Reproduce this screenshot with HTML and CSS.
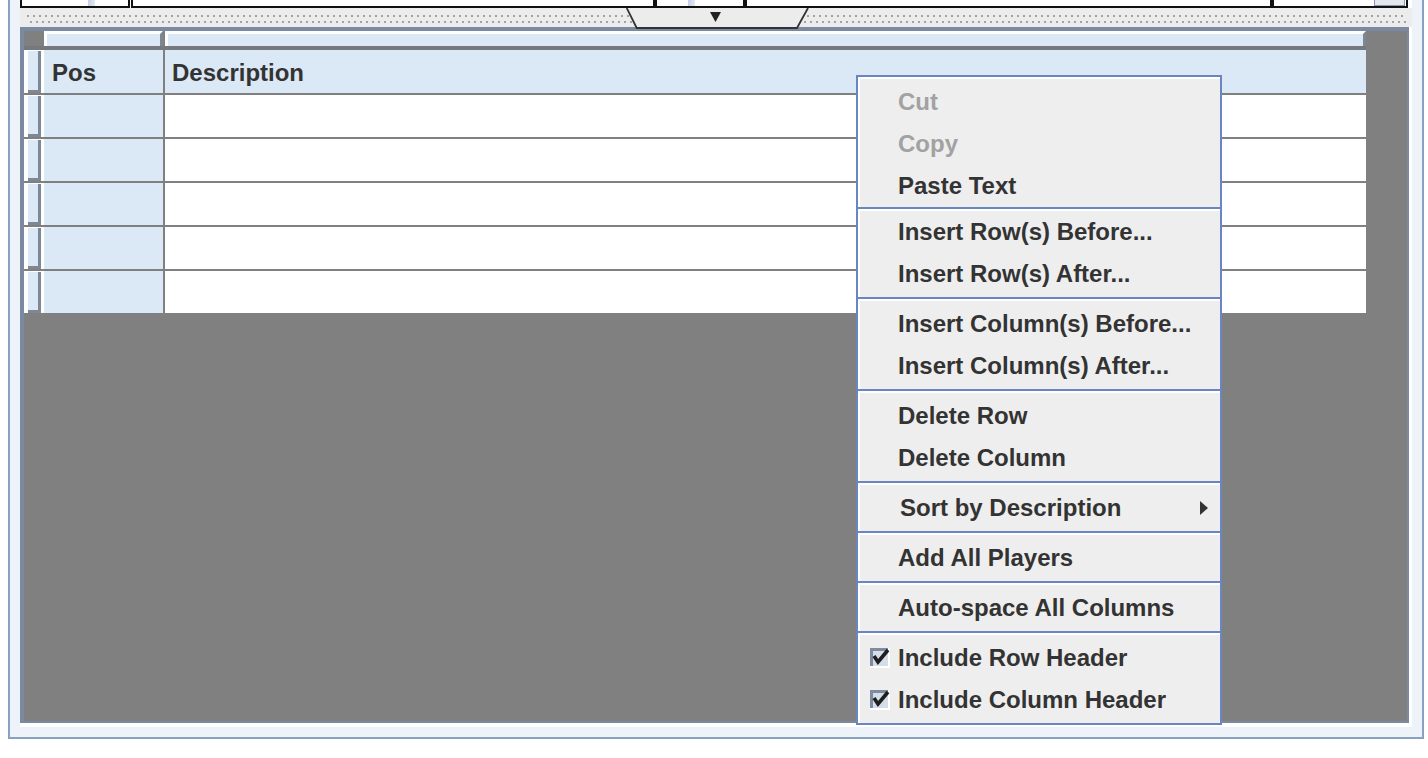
FILE: index.html
```html
<!DOCTYPE html>
<html lang="en">
<head>
<meta charset="UTF-8">
<title>Table editor</title>
<link rel="stylesheet" href="styles.css">
</head>
<body>
    <div class="frame">
        <div class="pane">
            <!-- bottom edge of the editor fields above the split -->
            <div class="fields">
                <div class="field f1"><span class="nub"></span></div>
                <div class="field f2"></div>
                <div class="field f3"><span class="nub"></span></div>
                <div class="field f4"></div>
                <div class="field f5"><span class="mini-btn"></span></div>
            </div>

            <div class="divider">
                <svg class="grip" height="8">
                    <defs>
                        <pattern id="dots" width="6" height="8" patternUnits="userSpaceOnUse">
                            <rect x="1" y="0" width="2" height="2" fill="#a3a3a3" />
                            <rect x="4" y="6" width="2" height="2" fill="#a3a3a3" />
                        </pattern>
                    </defs>
                    <rect width="100%" height="8" fill="url(#dots)" />
                </svg>
                <svg class="tab" width="183" height="21" viewBox="0 0 183 21">
                    <polygon points="0.7,0 182,0 171,20 10.7,20" fill="#ececec" />
                    <polyline points="0.7,0 10.7,20 171,20 182,0" fill="none" stroke="#333" stroke-width="1.8" />
                    <polygon points="84,4 95,4 89.5,14" fill="#222" />
                </svg>
            </div>

            <div class="scroll-wrap">
                <div class="viewport">
                    <div class="table">
                        <div class="hdr-top">
                            <div class="corner"></div>
                            <div class="hcell pos-w"></div>
                            <div class="hcell desc-w"></div>
                        </div>
                        <div class="row head">
                            <div class="rh"><span></span></div>
                            <div class="cell pos">Pos</div>
                            <div class="cell desc">Description</div>
                        </div>
                        <div class="row">
                            <div class="rh"><span></span></div>
                            <div class="cell pos"></div>
                            <div class="cell desc"></div>
                        </div>
                        <div class="row">
                            <div class="rh"><span></span></div>
                            <div class="cell pos"></div>
                            <div class="cell desc"></div>
                        </div>
                        <div class="row">
                            <div class="rh"><span></span></div>
                            <div class="cell pos"></div>
                            <div class="cell desc"></div>
                        </div>
                        <div class="row">
                            <div class="rh"><span></span></div>
                            <div class="cell pos"></div>
                            <div class="cell desc"></div>
                        </div>
                        <div class="row">
                            <div class="rh"><span></span></div>
                            <div class="cell pos"></div>
                            <div class="cell desc"></div>
                        </div>
                    </div>
                </div>
            </div>
        </div>
    </div>

    <!-- Context menu -->
    <div class="popup">
        <div class="grp">
            <div class="mi off">Cut</div>
            <div class="mi off">Copy</div>
            <div class="mi">Paste Text</div>
        </div>
        <div class="grp snug">
            <div class="mi">Insert Row(s) Before...</div>
            <div class="mi">Insert Row(s) After...</div>
        </div>
        <div class="grp">
            <div class="mi">Insert Column(s) Before...</div>
            <div class="mi">Insert Column(s) After...</div>
        </div>
        <div class="grp">
            <div class="mi">Delete Row</div>
            <div class="mi">Delete Column</div>
        </div>
        <div class="grp">
            <div class="mi sub">
                <span>Sort by Description</span>
                <svg width="8" height="14" viewBox="0 0 8 14"><polygon points="0,0 8,7 0,14" fill="#333" /></svg>
            </div>
        </div>
        <div class="grp">
            <div class="mi">Add All Players</div>
        </div>
        <div class="grp">
            <div class="mi">Auto-space All Columns</div>
        </div>
        <div class="grp">
            <div class="mi check">
                <svg class="box" width="20" height="20" viewBox="0 0 20 20">
                    <rect width="20" height="20" fill="#fff" />
                    <rect width="18" height="18" fill="#7d8ca0" />
                    <rect x="3" y="3" width="15" height="15" fill="#d5dee8" />
                    <polyline points="4,8 8,14 18,2" fill="none" stroke="#1e1e1e" stroke-width="3.6" />
                </svg>
                <span>Include Row Header</span>
            </div>
            <div class="mi check">
                <svg class="box" width="20" height="20" viewBox="0 0 20 20">
                    <rect width="20" height="20" fill="#fff" />
                    <rect width="18" height="18" fill="#7d8ca0" />
                    <rect x="3" y="3" width="15" height="15" fill="#d5dee8" />
                    <polyline points="4,8 8,14 18,2" fill="none" stroke="#1e1e1e" stroke-width="3.6" />
                </svg>
                <span>Include Column Header</span>
            </div>
        </div>
    </div>
</body>
</html>
```

FILE: styles.css
```css
body {
    margin: 0;
    background: #fff;
    font-family: "Liberation Sans", Arial, sans-serif;
    color: #333;
}

/* Outer panel */
.frame {
    margin-left: 8px;
    width: 1416px;
    box-sizing: border-box;
    border: 2px solid #8aa0c2;
    border-top: none;
    padding: 0 10px 10px;
    background: #eef2f9;
}

.pane {
    display: flex;
    flex-direction: column;
    height: 727px;
}

/* Cut-off fields at the top */
.fields {
    display: flex;
    height: 8px;
    background: #fff;
}

.field {
    display: flex;
    box-sizing: border-box;
    height: 8px;
    border: 2px solid #111;
    border-top: none;
    background: #fff;
}

.f1 { width: 110px; }
.f2 { width: 524px; margin-left: 1px; }
.f3 { width: 90px; }
.f4 { width: 527px; }
.f5 { width: 136px; }

.nub {
    display: block;
    width: 7px;
    height: 6px;
    background: linear-gradient(90deg, #c3d1e4, #e3eaf3);
}

.f1 .nub { margin-left: 66px; }
.f3 .nub { margin-left: 31px; }

.mini-btn {
    display: block;
    margin-left: auto;
    margin-right: 1px;
    width: 29px;
    height: 5px;
    border: 1px solid #8a99ad;
    border-top: none;
    background: #e4e8ee;
}

/* Split pane divider */
.divider {
    position: relative;
    height: 19px;
    box-sizing: border-box;
    padding: 7px 6px 0;
    background: #ececec;
}

.grip {
    display: block;
    width: 100%;
}

.tab {
    position: absolute;
    left: 606px;
    top: 0;
    z-index: 2;
}

/* Scroll pane */
.scroll-wrap {
    flex: 1;
    box-sizing: border-box;
    border-right: 3px solid #fff;
    border-bottom: 4px solid #fff;
}

.viewport {
    height: 100%;
    box-sizing: border-box;
    border-style: solid;
    border-color: #7a8aa0;
    border-width: 4px 2px 2px 4px;
    background: #808080;
    overflow: hidden;
}

.table {
    width: 1342px;
}

.hdr-top {
    display: flex;
    height: 15px;
    border-bottom: 4px solid #75797e;
    background: #808080;
}

.corner {
    width: 20px;
}

.hcell {
    box-sizing: border-box;
    height: 15px;
    border-top: 3px solid #fff;
    border-left: 3px solid #fff;
    border-right: 3px solid #7c8794;
    background: #dbe8f5;
}

.pos-w {
    width: 119px;
    margin-right: 2px;
}

.desc-w {
    flex: 1;
}

.row {
    display: flex;
    height: 42px;
    border-bottom: 2px solid #808080;
}

.row:last-child {
    border-bottom: none;
}

.row.head {
    height: 43px;
}

.rh {
    display: flex;
    width: 20px;
    box-sizing: border-box;
    padding: 1px 3px 0 4px;
    background: #fff;
}

.rh span {
    flex: 1;
    background: #dbe8f5;
    border-right: 3px solid #7d8894;
    border-bottom: 3px solid #7d8894;
}

.cell {
    box-sizing: border-box;
    font-size: 24px;
    font-weight: bold;
    line-height: 40px;
    white-space: nowrap;
}

.cell.pos {
    width: 121px;
    padding-left: 8px;
    border-right: 2px solid #808080;
    background: #dbe8f5;
}

.cell.desc {
    flex: 1;
    padding-left: 7px;
    background: #fff;
}

.head .cell {
    padding-top: 3px;
    background: #dbe8f5;
}

/* Popup menu */
.popup {
    position: absolute;
    left: 856px;
    top: 75px;
    width: 366px;
    box-sizing: border-box;
    border: 2px solid #6a86c2;
    background: #eeeeee;
    box-shadow: inset 2px 2px 0 #fff;
    z-index: 10;
}

.grp {
    padding: 4px 0 2px;
}

.grp:first-child {
    padding: 4px 0 0;
}

.grp + .grp {
    border-top: 2px solid #6a86c2;
    box-shadow: inset 0 2px 0 #fff;
}

.grp.snug {
    padding-top: 2px;
}

.mi {
    height: 42px;
    padding-left: 40px;
    font-size: 24px;
    font-weight: bold;
    line-height: 42px;
    color: #333;
    white-space: nowrap;
}

.mi.off {
    color: #a2a2a2;
}

.mi.sub {
    display: flex;
    align-items: center;
    justify-content: space-between;
    padding-left: 42px;
    padding-right: 12px;
}

.mi.check {
    display: flex;
    align-items: center;
    padding-left: 12px;
}

.mi.check .box {
    margin-right: 8px;
    flex: none;
}
```
